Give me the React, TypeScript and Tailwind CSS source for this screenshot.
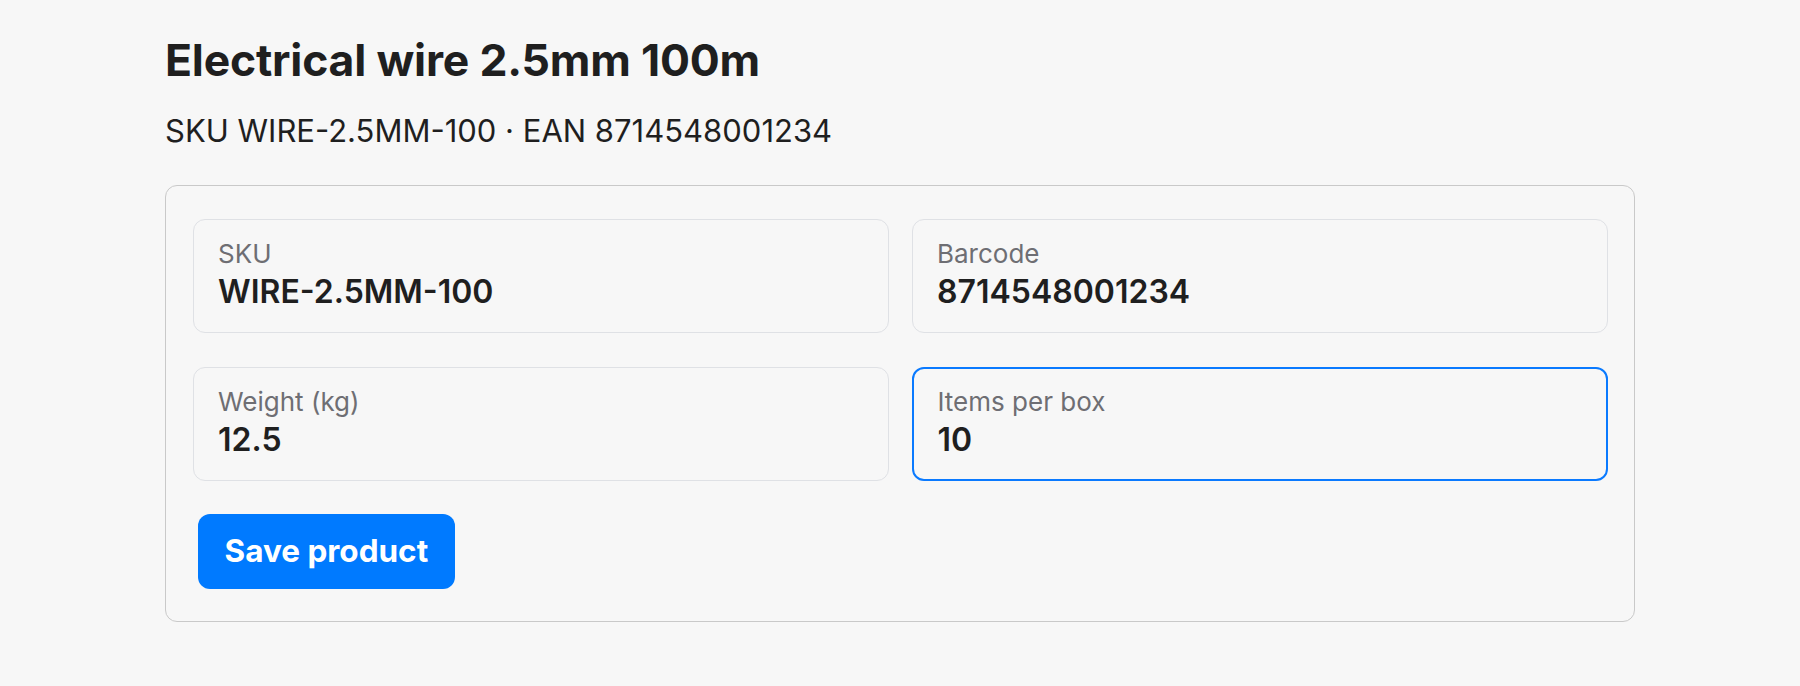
import React from "react";

function Field({ label, value, focused }: { label: string; value: string; focused?: boolean }) {
  return (
    <div
      className={
        focused
          ? "h-[114px] rounded-[12px] border-2 border-[#0a7aff] pl-[24px] pt-[17.5px]"
          : "h-[114px] rounded-[12px] border-[1.5px] border-[#dfe1e5] pl-[24.5px] pt-[18px]"
      }
    >
      <div className="text-[26px] leading-[32px] text-[#6e6e73]">{label}</div>
      <div className="mt-[4px] text-[32px] leading-[36px] font-semibold text-[#1f1f1f]">{value}</div>
    </div>
  );
}

export default function App() {
  return (
    <div
      className="min-h-screen bg-[#f7f7f7] px-[165px] pt-[35px] text-[#1f1f1f]"
      style={{ fontFamily: "Inter, 'Noto Sans', sans-serif" }}
    >
      <h1 className="text-[44.5px] leading-[50px] font-bold tracking-[-0.2px]">Electrical wire 2.5mm 100m</h1>
      <p className="mt-[28px] text-[31px] leading-[36px] text-[#1f1f1f]">
        SKU WIRE-2.5MM-100 · EAN 8714548001234
      </p>
      <div className="mt-[36px] rounded-[12px] border-[1.5px] border-[#c9c9c9] px-[26.5px] pt-[32.5px] pb-[32.5px]">
        <div className="grid grid-cols-2 gap-x-[23px] gap-y-[34px]">
          <Field label="SKU" value="WIRE-2.5MM-100" />
          <Field label="Barcode" value="8714548001234" />
          <Field label="Weight (kg)" value="12.5" />
          <Field label="Items per box" value="10" focused />
        </div>
        <button className="ml-[5px] mt-[33px] flex h-[75px] items-center rounded-[12px] bg-[#007aff] px-[27px] text-[31.5px] font-bold text-white">
          Save product
        </button>
      </div>
    </div>
  );
}
